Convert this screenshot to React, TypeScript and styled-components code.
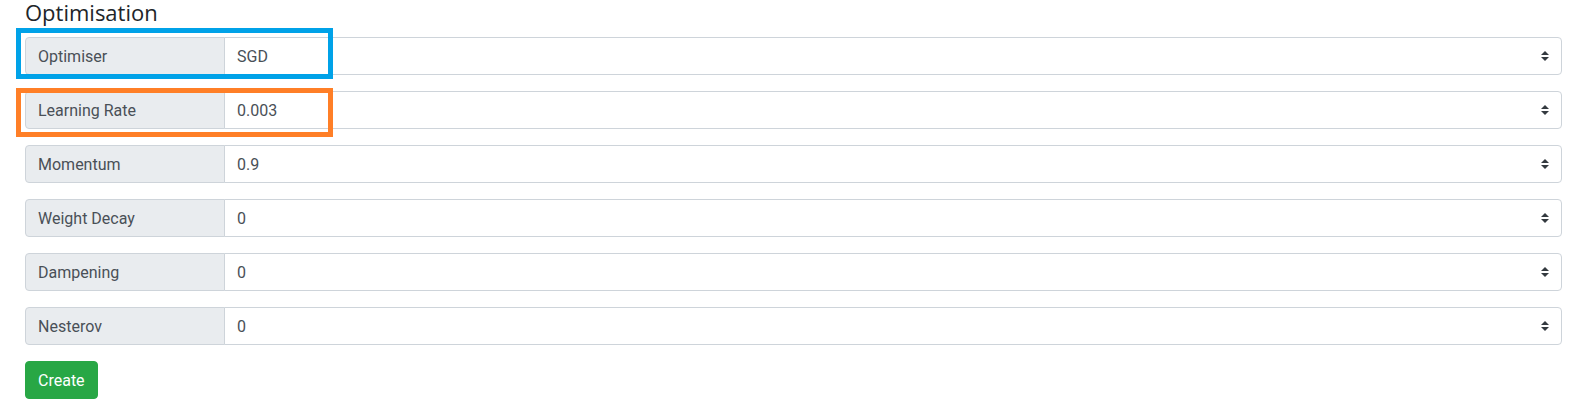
import styled, { createGlobalStyle } from 'styled-components';

const GlobalStyle = createGlobalStyle`
  body {
    margin: 0;
    background: #ffffff;
    font-family: Roboto, 'Liberation Sans', sans-serif;
    color: #212529;
  }
`;

type Field = {
  label: string;
  value: string;
  mark?: 'blue' | 'orange';
};

const fields: Field[] = [
  { label: 'Optimiser', value: 'SGD', mark: 'blue' },
  { label: 'Learning Rate', value: '0.003', mark: 'orange' },
  { label: 'Momentum', value: '0.9' },
  { label: 'Weight Decay', value: '0' },
  { label: 'Dampening', value: '0' },
  { label: 'Nesterov', value: '0' },
];

function SortArrows() {
  return (
    <svg width="8" height="10" viewBox="0 0 4 5">
      <path d="M2 0L0 2h4zm0 5L0 3h4z" fill="#343a40" />
    </svg>
  );
}

export default function App() {
  return (
    <>
      <GlobalStyle />
      <Wrapper>
        <Title>Optimisation</Title>
        <form onSubmit={(e) => e.preventDefault()}>
          {fields.map((field) => (
            <InputGroup key={field.label}>
              <Label>{field.label}</Label>
              <SelectBox>
                <span>{field.value}</span>
                <SortArrows />
              </SelectBox>
              {field.mark && <Highlight $mark={field.mark} />}
            </InputGroup>
          ))}
          <CreateButton type="submit">Create</CreateButton>
        </form>
      </Wrapper>
    </>
  );
}

export const Wrapper = styled.div`
  padding: 0 10px 8px 25px;
`;

export const Title = styled.h4`
  margin: -1px 0 12px 0;
  font-family: 'Open Sans', sans-serif;
  font-weight: 500;
  font-size: 22px;
  line-height: 26px;
  color: #212529;
`;

export const InputGroup = styled.div`
  position: relative;
  display: flex;
  align-items: stretch;
  height: 38px;
  margin-bottom: 16px;
`;

export const Label = styled.div`
  display: flex;
  align-items: center;
  box-sizing: border-box;
  width: 200px;
  padding: 0 12px;
  font-size: 16px;
  color: #495057;
  background: #e9ecef;
  border: 1px solid #ced4da;
  border-radius: 4px 0 0 4px;
`;

export const SelectBox = styled.div`
  flex: 1;
  display: flex;
  align-items: center;
  justify-content: space-between;
  box-sizing: border-box;
  padding: 0 12px;
  margin-left: -1px;
  font-size: 16px;
  color: #495057;
  background: #ffffff;
  border: 1px solid #ced4da;
  border-radius: 0 4px 4px 0;
`;

const markBox = {
  blue: { color: '#00a2e8', top: -9, height: 51 },
  orange: { color: '#ff7f27', top: -3, height: 49 },
};

export const Highlight = styled.div<{ $mark: 'blue' | 'orange' }>`
  position: absolute;
  left: -9px;
  top: ${(p) => markBox[p.$mark].top}px;
  width: 317px;
  height: ${(p) => markBox[p.$mark].height}px;
  box-sizing: border-box;
  border: 5px solid ${(p) => markBox[p.$mark].color};
  pointer-events: none;
`;

export const CreateButton = styled.button`
  height: 38px;
  padding: 0 12px;
  font-family: Roboto, 'Liberation Sans', sans-serif;
  font-size: 16px;
  color: #ffffff;
  background: #28a745;
  border: 1px solid #28a745;
  border-radius: 4px;
  cursor: pointer;
`;
